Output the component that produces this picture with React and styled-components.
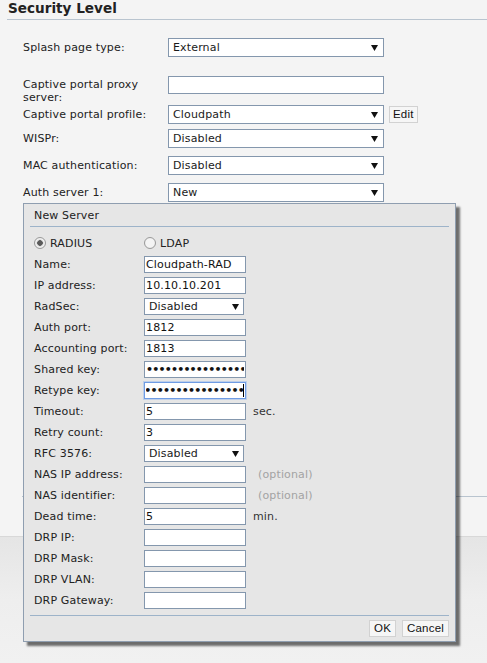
import React from 'react'
import styled, { createGlobalStyle } from 'styled-components'

const GlobalStyle = createGlobalStyle`
  html, body {
    margin: 0;
    padding: 0;
  }
  body {
    background: #f4f4f4;
    font-family: "DejaVu Sans", Verdana, sans-serif;
    font-size: 11px;
    letter-spacing: 0.15px;
    color: #222;
  }
`

const Page = styled.div`
  position: relative;
  width: 487px;
  height: 663px;
  overflow: hidden;
  display: flex;
  flex-direction: column;
`

const Content = styled.div`
  background: #f4f4f4;
  padding-bottom: 39px;
`

const Title = styled.h2`
  margin: 0 0 0 7px;
  padding-left: 1px;
  height: 19px;
  font-size: 13.6px;
  line-height: 16px;
  font-weight: bold;
  letter-spacing: 0;
  color: #222;
  border-bottom: 1px solid #b9c4cf;
`

const Form = styled.div`
  padding-left: 23px;
`

const Row = styled.div`
  display: flex;
  align-items: ${(p) => (p.$top ? 'flex-start' : 'center')};
  margin-top: ${(p) => p.$mt || 0}px;
`

const Label = styled.div`
  width: ${(p) => (p.$narrow ? 110 : 145)}px;
  flex-shrink: 0;
  line-height: 13px;
  padding-top: ${(p) => (p.$top ? 2 : 0)}px;
`

const SelectBox = styled.div`
  box-sizing: border-box;
  width: ${(p) => (p.$compact ? 100 : 216)}px;
  height: ${(p) => (p.$compact ? 17 : 19)}px;
  padding: 0 ${(p) => (p.$compact ? 4 : 5)}px 0 4px;
  display: flex;
  align-items: center;
  justify-content: space-between;
  background: #fff;
  border: 1px solid #8497ad;
  color: #1a1a1a;
`

const TextBox = styled.input`
  box-sizing: border-box;
  width: ${(p) => (p.$compact ? 102 : 216)}px;
  height: ${(p) => (p.$compact ? 17 : 18)}px;
  margin: 0;
  padding: 0 ${(p) => (p.$compact ? 1 : 4)}px;
  font: inherit;
  font-weight: ${(p) => (p.type === 'password' ? 'bold' : 'normal')};
  letter-spacing: ${(p) => (p.type === 'password' ? '-0.8px' : 'inherit')};
  color: #111;
  background: #fff;
  border: 1px solid ${(p) => (p.$focus ? '#6f9ce4' : '#8497ad')};
  box-shadow: ${(p) => (p.$focus ? '0 0 0 1px rgba(140, 180, 240, 0.45)' : 'none')};
  direction: ${(p) => (p.$end ? 'rtl' : 'ltr')};
  outline: none;
`

const Caret = styled.span`
  position: relative;
  display: inline-flex;

  &::after {
    content: "";
    position: absolute;
    right: 2px;
    top: 2px;
    bottom: 2px;
    width: 1px;
    background: #000;
  }
`

const Button = styled.button`
  height: 17px;
  margin: 0 0 0 ${(p) => p.$ml || 0}px;
  padding: 0 ${(p) => p.$px || 4}px;
  font-family: "Liberation Sans", Arial, sans-serif;
  font-size: 11.5px;
  letter-spacing: 0.2px;
  color: #111;
  background: #f6f6f6;
  border: 1px solid #d2d2d2;
  border-radius: 0;
  line-height: 15px;
`

const Unit = styled.span`
  margin-left: ${(p) => (p.$muted ? 12 : 7)}px;
  color: ${(p) => (p.$muted ? '#a3a3a3' : '#333')};
`

const SectionRule = styled.div`
  margin: 294px 0 0 22px;
  border-top: 1px solid #b9c4cf;
`

const Footer = styled.div`
  flex: 1;
  border-top: 1px solid #d8d8d8;
  background: linear-gradient(#e5e5e5, #eeeeee 50%, #f1f1f1);
`

const Dialog = styled.div`
  position: absolute;
  left: 23px;
  top: 203px;
  box-sizing: border-box;
  width: 433px;
  padding: 0 6px 4px 6px;
  background: #e6e6e6;
  border: 1px solid #8f9eb0;
  box-shadow: 4px 4px 2px rgba(0, 0, 0, 0.55);
`

const DialogHeader = styled.div`
  height: 22px;
  padding-left: 4px;
  display: flex;
  align-items: center;
  border-bottom: 1px solid #9db3c9;
`

const RadioRow = styled.div`
  height: 26px;
  padding: 3px 0 0 4px;
  display: flex;
  align-items: center;
`

const RadioOption = styled.label`
  width: 110px;
  display: flex;
  align-items: center;
  gap: 4px;
`

const RadioDot = styled.span`
  box-sizing: border-box;
  width: 12px;
  height: 12px;
  border-radius: 50%;
  border: 1px solid #9a9a9a;
  background: radial-gradient(circle, ${(p) => (p.$checked ? '#5a5a5a 0 2.5px, #cfcfcf 3px,' : '')} #f4f4f4 4px, #dcdcdc);
`

const FieldList = styled.div`
  padding-left: 4px;
  display: flex;
  flex-direction: column;
  gap: 4px;
`

const Field = styled.div`
  height: 17px;
  display: flex;
  align-items: center;
`

const DialogFooter = styled.div`
  margin-top: 6px;
  padding-top: 4px;
  border-top: 1px solid #9db3c9;
  display: flex;
  justify-content: flex-end;
  gap: 6px;
`

const Arrow = () => (
  <svg width="7" height="6" viewBox="0 0 7 6">
    <polygon points="0,0 7,0 3.5,6" fill="#111" />
  </svg>
)

const Select = ({ value, compact }) => (
  <SelectBox $compact={compact}>
    <span>{value}</span>
    <Arrow />
  </SelectBox>
)

const secret = 'cloudpathsecret123'

const serverFields = [
  { label: 'Name:', value: 'Cloudpath-RAD' },
  { label: 'IP address:', value: '10.10.10.201' },
  { label: 'RadSec:', select: 'Disabled' },
  { label: 'Auth port:', value: '1812' },
  { label: 'Accounting port:', value: '1813' },
  { label: 'Shared key:', password: true },
  { label: 'Retype key:', password: true, focus: true },
  { label: 'Timeout:', value: '5', unit: 'sec.' },
  { label: 'Retry count:', value: '3' },
  { label: 'RFC 3576:', select: 'Disabled' },
  { label: 'NAS IP address:', value: '', note: '(optional)' },
  { label: 'NAS identifier:', value: '', note: '(optional)' },
  { label: 'Dead time:', value: '5', unit: 'min.' },
  { label: 'DRP IP:', value: '' },
  { label: 'DRP Mask:', value: '' },
  { label: 'DRP VLAN:', value: '' },
  { label: 'DRP Gateway:', value: '' },
]

const renderControl = (f) => {
  if (f.select) return <Select value={f.select} compact />
  if (f.password && f.focus) {
    return (
      <Caret>
        <TextBox $compact $focus $end type="password" defaultValue={secret} readOnly />
      </Caret>
    )
  }
  if (f.password) return <TextBox $compact type="password" defaultValue={secret} readOnly />
  return <TextBox $compact type="text" defaultValue={f.value} readOnly />
}

const App = () => {
  return (
    <>
      <GlobalStyle />
      <Page>
        <Content>
          <Title>Security Level</Title>
          <Form>
            <Row $mt={18}>
              <Label>Splash page type:</Label>
              <Select value="External" />
            </Row>
            <Row $mt={19} $top>
              <Label $top>Captive portal proxy server:</Label>
              <TextBox type="text" defaultValue="" readOnly />
            </Row>
            <Row $mt={1}>
              <Label>Captive portal profile:</Label>
              <Select value="Cloudpath" />
              <Button $ml={5} $px={3}>Edit</Button>
            </Row>
            <Row $mt={5}>
              <Label>WISPr:</Label>
              <Select value="Disabled" />
            </Row>
            <Row $mt={8}>
              <Label>MAC authentication:</Label>
              <Select value="Disabled" />
            </Row>
            <Row $mt={8}>
              <Label>Auth server 1:</Label>
              <Select value="New" />
            </Row>
          </Form>
          <SectionRule />
        </Content>
        <Footer />

        <Dialog>
          <DialogHeader>New Server</DialogHeader>
          <RadioRow>
            <RadioOption>
              <RadioDot $checked />
              RADIUS
            </RadioOption>
            <RadioOption>
              <RadioDot />
              LDAP
            </RadioOption>
          </RadioRow>
          <FieldList>
            {serverFields.map((f) => (
              <Field key={f.label}>
                <Label $narrow>{f.label}</Label>
                {renderControl(f)}
                {f.unit && <Unit>{f.unit}</Unit>}
                {f.note && <Unit $muted>{f.note}</Unit>}
              </Field>
            ))}
          </FieldList>
          <DialogFooter>
            <Button $px={4}>OK</Button>
            <Button $px={4}>Cancel</Button>
          </DialogFooter>
        </Dialog>
      </Page>
    </>
  )
}

export default App
